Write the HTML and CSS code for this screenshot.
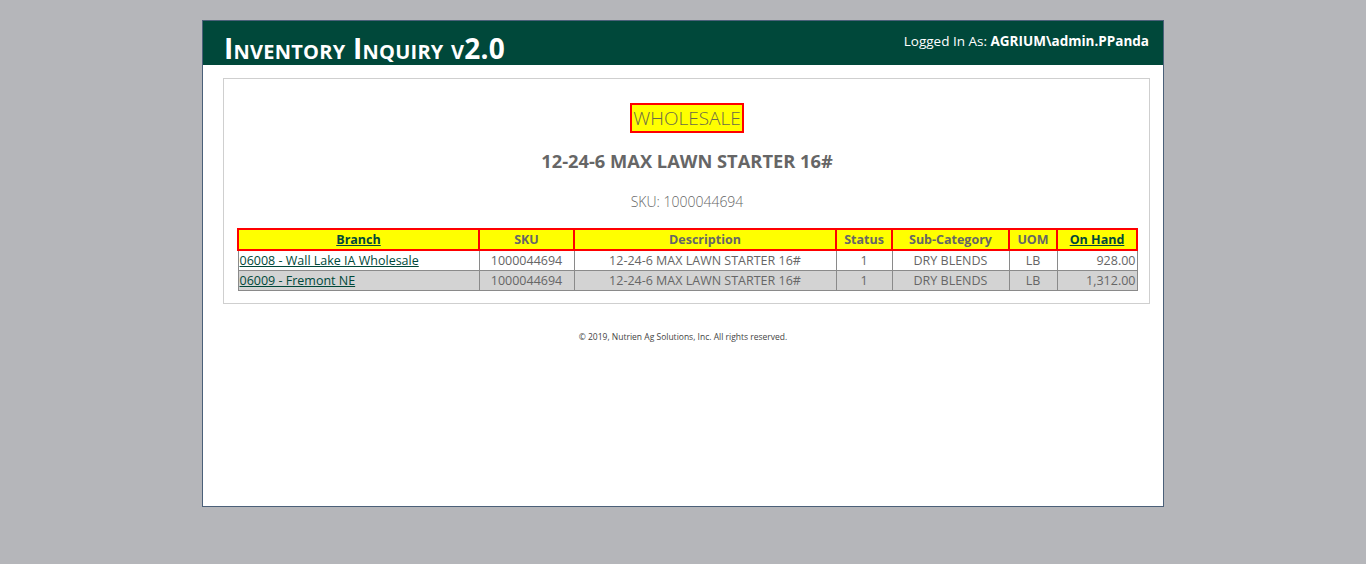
FILE: index.html
```html
<!DOCTYPE html>
<html>
<head>
<meta charset="utf-8">
<title>Inventory Inquiry v2.0</title>
<link rel="stylesheet" href="styles.css">
</head>
<body>
<div class="page">
  <header class="topbar">
    <h1 class="app-title">Inventory Inquiry v2.0</h1>
    <div class="user">Logged In As: <b>AGRIUM\admin.PPanda</b></div>
  </header>
  <main class="panel">
    <div class="channel-wrap"><span class="channel">WHOLESALE</span></div>
    <h2 class="product">12-24-6 MAX LAWN STARTER 16#</h2>
    <p class="sku">SKU: 1000044694</p>
    <table class="grid">
      <colgroup>
        <col class="c-branch"><col class="c-sku"><col class="c-desc"><col class="c-status"><col class="c-cat"><col class="c-uom"><col class="c-hand">
      </colgroup>
      <thead>
        <tr>
          <th><a href="#">Branch</a></th>
          <th>SKU</th>
          <th>Description</th>
          <th>Status</th>
          <th>Sub-Category</th>
          <th>UOM</th>
          <th><a href="#">On Hand</a></th>
        </tr>
      </thead>
      <tbody>
        <tr>
          <td class="left"><a href="#">06008 - Wall Lake IA Wholesale</a></td>
          <td>1000044694</td>
          <td>12-24-6 MAX LAWN STARTER 16#</td>
          <td>1</td>
          <td>DRY BLENDS</td>
          <td>LB</td>
          <td class="right">928.00</td>
        </tr>
        <tr class="alt">
          <td class="left"><a href="#">06009 - Fremont NE</a></td>
          <td>1000044694</td>
          <td>12-24-6 MAX LAWN STARTER 16#</td>
          <td>1</td>
          <td>DRY BLENDS</td>
          <td>LB</td>
          <td class="right">1,312.00</td>
        </tr>
      </tbody>
    </table>
  </main>
  <footer class="footer">© 2019, Nutrien Ag Solutions, Inc. All rights reserved.</footer>
</div>
</body>
</html>
```
FILE: styles.css
```css
html, body {
  margin: 0;
  padding: 0;
}
body {
  background: #b5b6ba;
  font-family: "Open Sans", "Noto Sans", sans-serif;
  color: #666;
  padding-top: 20px;
  height: 564px;
  box-sizing: border-box;
}
.page {
  width: 960px;
  height: 485px;
  margin: 0 auto;
  background: #fff;
  border: 1px solid #4b6079;
}
.topbar {
  height: 44px;
  background: #00483a;
  display: flex;
  justify-content: space-between;
  align-items: flex-start;
  padding: 0 14px 0 21px;
}
.app-title {
  margin: 10px 0 0;
  font-size: 28px;
  font-weight: 700;
  font-variant: small-caps;
  color: #fff;
  letter-spacing: 0.25px;
  line-height: 34px;
}
.user {
  margin-top: 10px;
  font-size: 13.5px;
  color: #fff;
  line-height: 20px;
}
.user b {
  font-weight: 700;
}
.panel {
  margin: 13px 13px 0 20px;
  border: 1px solid #cfcfcf;
  padding: 24px 12px 12px 13px;
}
.channel-wrap {
  text-align: center;
}
.channel {
  display: inline-block;
  background: #ffff00;
  border: 2px solid #ff0000;
  font-size: 19px;
  font-weight: 300;
  color: #6b6b4a;
  line-height: 26px;
  padding: 0 1px;
}
.product {
  margin: 16px 0 0;
  text-align: center;
  font-size: 18.3px;
  font-weight: 700;
  color: #666;
  line-height: 24px;
}
.sku {
  margin: 19px 0 0;
  text-align: center;
  font-size: 14px;
  font-weight: 300;
  color: #666;
  line-height: 20px;
}
.grid {
  margin-top: 16px;
  width: 899px;
  table-layout: fixed;
  border-collapse: collapse;
  font-size: 12.5px;
}
.c-branch { width: 241px; }
.c-sku { width: 95px; }
.c-desc { width: 262px; }
.c-status { width: 56px; }
.c-cat { width: 117px; }
.c-uom { width: 48px; }
.c-hand { width: 80px; }
.grid th {
  background: #ffff00;
  border: 2px solid #ff0000;
  font-weight: 700;
  color: #666;
  height: 19px;
  padding: 0 2px;
  line-height: 19px;
  text-align: center;
}
.grid th a {
  color: #00483a;
}
.grid td {
  border: 1px solid #8a8a8a;
  height: 19px;
  padding: 0 1px;
  line-height: 18px;
  text-align: center;
  color: #666;
  white-space: nowrap;
  overflow: hidden;
}
.grid td.left { text-align: left; }
.grid td.right { text-align: right; }
.grid td a {
  color: #00483a;
}
.grid tr.alt td {
  background: #d3d3d3;
}
.footer {
  margin-top: 27px;
  text-align: center;
  font-size: 8.5px;
  color: #444;
}
```
